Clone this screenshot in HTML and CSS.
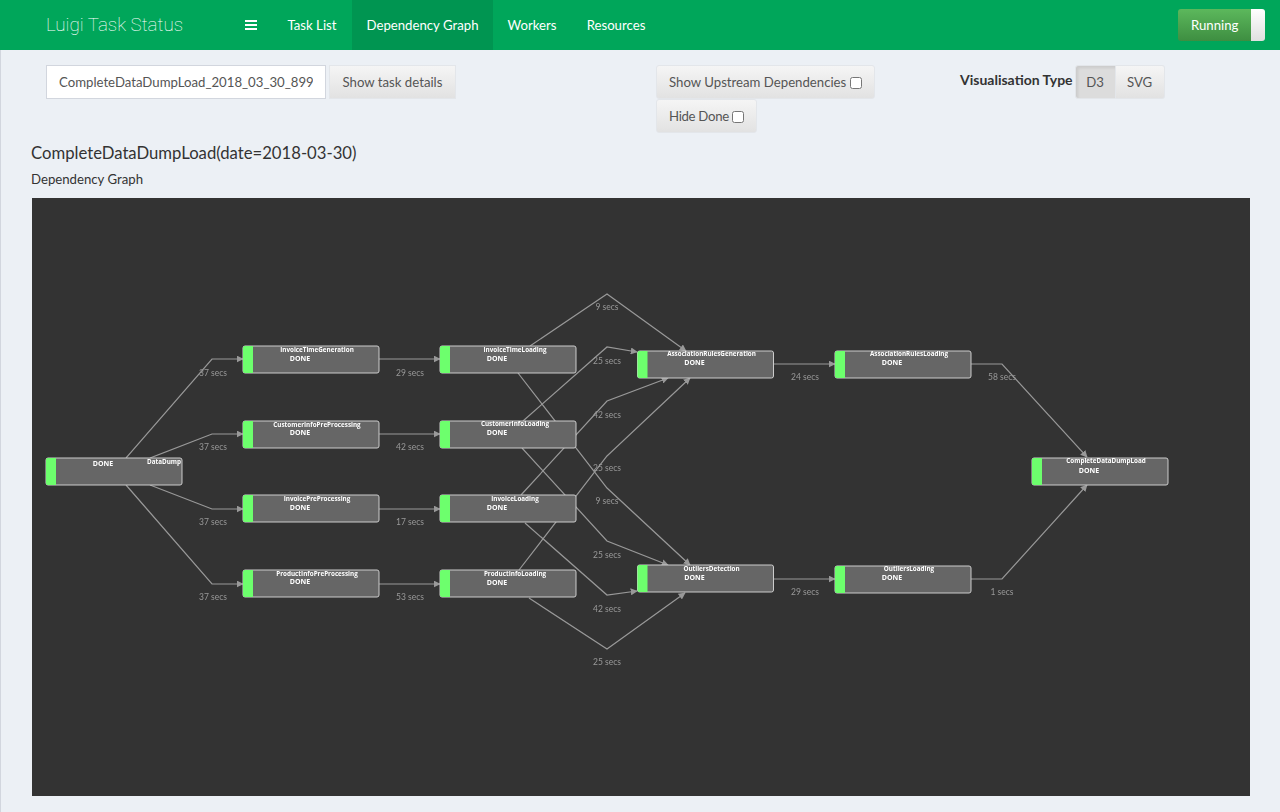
FILE: index.html
```html
<!DOCTYPE html>
<html lang="en">
<head>
<meta charset="UTF-8">
<title>Luigi Task Status</title>
<link rel="stylesheet" href="styles.css">
</head>
<body>
<header class="navbar">
    <a class="brand">Luigi Task Status</a>
    <nav class="nav-list">
        <a class="nav-item toggle-icon"><span class="bars"></span></a>
        <a class="nav-item">Task List</a>
        <a class="nav-item active">Dependency Graph</a>
        <a class="nav-item">Workers</a>
        <a class="nav-item">Resources</a>
    </nav>
    <div class="run-switch"><span class="run-label">Running</span><span class="run-handle"></span></div>
</header>

<main class="content">
    <div class="toolbar">
        <div class="search-group">
            <input class="task-input" type="text" value="CompleteDataDumpLoad_2018_03_30_8993f1a2b7">
            <button class="btn">Show task details</button>
        </div>
        <div class="option-group">
            <label class="btn">Show Upstream Dependencies <input type="checkbox"></label>
            <label class="btn btn-tight">Hide Done <input type="checkbox"></label>
        </div>
        <div class="vis-group">
            <span class="vis-label">Visualisation Type</span>
            <div class="btn-pair">
                <button class="btn pressed">D3</button>
                <button class="btn">SVG</button>
            </div>
        </div>
    </div>

    <h3 class="task-title">CompleteDataDumpLoad(date=2018-03-30)</h3>
    <p class="graph-caption">Dependency Graph</p>

    <div class="graph-panel">
        <!-- viewBox starts at the panel corner so the numbers below are page coordinates -->
        <svg class="graph" viewBox="32 198 1218 598" width="1218" height="598">
            <defs>
                <marker id="arrow" viewBox="0 0 10 10" refX="9" refY="5" markerWidth="7" markerHeight="7" markerUnits="userSpaceOnUse" orient="auto">
                    <path d="M0 0L10 5L0 10z" fill="#999"/>
                </marker>
            </defs>

            <g class="edges">
                <polyline points="126,458 212,359 243,359"/>
                <polyline points="150,458 212,434 243,434"/>
                <polyline points="150,485 212,509 243,509"/>
                <polyline points="126,485 212,584 243,584"/>
                <polyline points="379,359 440,359"/>
                <polyline points="379,434 440,434"/>
                <polyline points="379,509 440,509"/>
                <polyline points="379,584 440,584"/>
                <polyline points="530,346 607,294 686,351"/>
                <polyline points="523,421 607,347 637,352"/>
                <polyline points="521,495 607,401 668,378"/>
                <polyline points="519,570 607,456 690,378"/>
                <polyline points="518,373 607,488 690,565"/>
                <polyline points="522,448 607,541 668,565"/>
                <polyline points="525,523 607,595 637,591"/>
                <polyline points="529,598 607,649 685,593"/>
                <polyline points="774,364 835,364"/>
                <polyline points="774,579 835,579"/>
                <polyline points="971,364 1002,364 1087,457"/>
                <polyline points="971,579 1002,579 1087,485"/>
            </g>

            <g class="edge-labels">
                <text x="213" y="376">37 secs</text>
                <text x="213" y="450">37 secs</text>
                <text x="213" y="525">37 secs</text>
                <text x="213" y="600">37 secs</text>
                <text x="410" y="376">29 secs</text>
                <text x="410" y="450">42 secs</text>
                <text x="410" y="525">17 secs</text>
                <text x="410" y="600">53 secs</text>
                <text x="607" y="310">9 secs</text>
                <text x="607" y="364">25 secs</text>
                <text x="607" y="418">42 secs</text>
                <text x="607" y="471">25 secs</text>
                <text x="607" y="504">9 secs</text>
                <text x="607" y="558">25 secs</text>
                <text x="607" y="612">42 secs</text>
                <text x="607" y="665">25 secs</text>
                <text x="805" y="380">24 secs</text>
                <text x="805" y="595">29 secs</text>
                <text x="1002" y="380">58 secs</text>
                <text x="1002" y="595">1 secs</text>
            </g>

            <g class="node" transform="translate(46 458)">
                <rect class="node-box" width="136" height="27" rx="2"/>
                <path class="node-state" d="M0 2a2 2 0 0 1 2-2h8v27H2a2 2 0 0 1-2-2z"/>
                <text class="node-name" x="118" y="5.5">DataDump</text>
                <text class="node-status" x="57" y="8">DONE</text>
            </g>
            <g class="node" transform="translate(243 346)">
                <rect class="node-box" width="136" height="27" rx="2"/>
                <path class="node-state" d="M0 2a2 2 0 0 1 2-2h8v27H2a2 2 0 0 1-2-2z"/>
                <text class="node-name" x="74" y="5.5">InvoiceTimeGeneration</text>
                <text class="node-status" x="57" y="15">DONE</text>
            </g>
            <g class="node" transform="translate(243 421)">
                <rect class="node-box" width="136" height="27" rx="2"/>
                <path class="node-state" d="M0 2a2 2 0 0 1 2-2h8v27H2a2 2 0 0 1-2-2z"/>
                <text class="node-name" x="74" y="5.5">CustomerInfoPreProcessing</text>
                <text class="node-status" x="57" y="14">DONE</text>
            </g>
            <g class="node" transform="translate(243 495)">
                <rect class="node-box" width="136" height="27" rx="2"/>
                <path class="node-state" d="M0 2a2 2 0 0 1 2-2h8v27H2a2 2 0 0 1-2-2z"/>
                <text class="node-name" x="74" y="6">InvoicePreProcessing</text>
                <text class="node-status" x="57" y="15">DONE</text>
            </g>
            <g class="node" transform="translate(243 570)">
                <rect class="node-box" width="136" height="27" rx="2"/>
                <path class="node-state" d="M0 2a2 2 0 0 1 2-2h8v27H2a2 2 0 0 1-2-2z"/>
                <text class="node-name" x="74" y="6">ProductInfoPreProcessing</text>
                <text class="node-status" x="57" y="14">DONE</text>
            </g>
            <g class="node" transform="translate(440 346)">
                <rect class="node-box" width="136" height="27" rx="2"/>
                <path class="node-state" d="M0 2a2 2 0 0 1 2-2h8v27H2a2 2 0 0 1-2-2z"/>
                <text class="node-name" x="75" y="5.5">InvoiceTimeLoading</text>
                <text class="node-status" x="57" y="15">DONE</text>
            </g>
            <g class="node" transform="translate(440 421)">
                <rect class="node-box" width="136" height="27" rx="2"/>
                <path class="node-state" d="M0 2a2 2 0 0 1 2-2h8v27H2a2 2 0 0 1-2-2z"/>
                <text class="node-name" x="75" y="5">CustomerInfoLoading</text>
                <text class="node-status" x="57" y="14">DONE</text>
            </g>
            <g class="node" transform="translate(440 495)">
                <rect class="node-box" width="136" height="27" rx="2"/>
                <path class="node-state" d="M0 2a2 2 0 0 1 2-2h8v27H2a2 2 0 0 1-2-2z"/>
                <text class="node-name" x="75" y="6">InvoiceLoading</text>
                <text class="node-status" x="57" y="15">DONE</text>
            </g>
            <g class="node" transform="translate(440 570)">
                <rect class="node-box" width="136" height="27" rx="2"/>
                <path class="node-state" d="M0 2a2 2 0 0 1 2-2h8v27H2a2 2 0 0 1-2-2z"/>
                <text class="node-name" x="75" y="6">ProductInfoLoading</text>
                <text class="node-status" x="57" y="15">DONE</text>
            </g>
            <g class="node" transform="translate(637.5 351)">
                <rect class="node-box" width="136" height="27" rx="2"/>
                <path class="node-state" d="M0 2a2 2 0 0 1 2-2h8v27H2a2 2 0 0 1-2-2z"/>
                <text class="node-name" x="74" y="5">AssociationRulesGeneration</text>
                <text class="node-status" x="57" y="14">DONE</text>
            </g>
            <g class="node" transform="translate(637.5 565)">
                <rect class="node-box" width="136" height="27" rx="2"/>
                <path class="node-state" d="M0 2a2 2 0 0 1 2-2h8v27H2a2 2 0 0 1-2-2z"/>
                <text class="node-name" x="74" y="6">OutliersDetection</text>
                <text class="node-status" x="57" y="15">DONE</text>
            </g>
            <g class="node" transform="translate(835 351)">
                <rect class="node-box" width="136" height="27" rx="2"/>
                <path class="node-state" d="M0 2a2 2 0 0 1 2-2h8v27H2a2 2 0 0 1-2-2z"/>
                <text class="node-name" x="74" y="5">AssociationRulesLoading</text>
                <text class="node-status" x="57" y="14">DONE</text>
            </g>
            <g class="node" transform="translate(835 566)">
                <rect class="node-box" width="136" height="27" rx="2"/>
                <path class="node-state" d="M0 2a2 2 0 0 1 2-2h8v27H2a2 2 0 0 1-2-2z"/>
                <text class="node-name" x="74" y="5">OutliersLoading</text>
                <text class="node-status" x="57" y="14">DONE</text>
            </g>
            <g class="node" transform="translate(1032 458)">
                <rect class="node-box" width="136" height="27" rx="2"/>
                <path class="node-state" d="M0 2a2 2 0 0 1 2-2h8v27H2a2 2 0 0 1-2-2z"/>
                <text class="node-name" x="74" y="5">CompleteDataDumpLoad</text>
                <text class="node-status" x="57" y="15">DONE</text>
            </g>
        </svg>
    </div>
</main>
</body>
</html>
```

FILE: styles.css
```css
* {
    box-sizing: border-box;
}
body {
    margin: 0;
    background-color: #ecf0f5;
    color: #333;
    font-family: Lato, "Open Sans", sans-serif;
    font-size: 13.2px;
}

/* top bar */
.navbar {
    display: flex;
    align-items: stretch;
    height: 50px;
    padding: 0 15px 0 46px;
    background-color: #00a65a;
    color: #fff;
}
.brand {
    width: 184px;
    line-height: 50px;
    font-family: Roboto, sans-serif;
    font-size: 18.8px;
    font-weight: 100;
}
.nav-list {
    display: grid;
    grid-template-columns: 42px 80px 141px 78px 90px;
}
.nav-item {
    line-height: 50px;
    text-align: center;
}
.nav-item.active {
    background-color: #009551;
}
.toggle-icon {
    display: flex;
    align-items: center;
    justify-content: center;
}
.bars {
    width: 12px;
    height: 10px;
    border-top: 2px solid #fff;
    border-bottom: 2px solid #fff;
    background: linear-gradient(#fff, #fff) center / 100% 2px no-repeat;
}
.run-switch {
    display: flex;
    width: 87px;
    height: 32px;
    margin: 9px 0 0 auto;
    border-radius: 3px;
    overflow: hidden;
}
.run-label {
    flex: 1;
    padding-left: 13px;
    line-height: 32px;
    background: linear-gradient(#5cb85c, #3e8e41);
}
.run-handle {
    width: 14px;
    background: linear-gradient(#fff, #e0e0e0);
}

/* controls row */
.content {
    padding: 15px 30px 0 30px;
    border-left: 1px solid #d2d6de;
    min-height: 762px;
}
.toolbar {
    display: grid;
    grid-template-columns: 625px 304px auto;
    height: 78px;
}
.search-group {
    display: flex;
    gap: 3px;
    align-items: flex-start;
    padding-left: 15px;
}
.task-input {
    width: 280px;
    height: 34px;
    padding: 0 12px;
    border: 1px solid #d2d6de;
    background-color: #fff;
    color: #555;
    font: inherit;
}
.btn {
    display: inline-block;
    height: 34px;
    padding: 0 12px;
    border: 1px solid #e3e6ea;
    border-radius: 3px;
    background: linear-gradient(#f5f5f5, #e2e2e2);
    color: #555;
    font: inherit;
    line-height: 32px;
    white-space: nowrap;
}
.btn-tight {
    letter-spacing: -0.3px;
}
.search-group .btn {
    border-radius: 0;
    width: 127px;
}
.option-group {
    display: flex;
    flex-direction: column;
    align-items: flex-start;
}
.btn input {
    width: 12px;
    height: 12px;
    margin: 0;
    vertical-align: -2px;
}
.vis-group {
    display: flex;
    gap: 2px;
    align-items: flex-start;
}
.vis-label {
    padding-top: 6px;
    font-size: 14px;
    font-weight: 700;
    color: #333;
}
.btn-pair {
    display: grid;
    grid-template-columns: 41px 49px;
}
.btn-pair .btn {
    padding: 0;
}
.btn-pair .btn:first-child {
    border-radius: 3px 0 0 3px;
}
.btn-pair .btn:last-child {
    border-radius: 0 3px 3px 0;
    border-left: 0;
}
.btn.pressed {
    background: #dcdcdc;
    box-shadow: inset 2px 2px 3px rgba(0, 0, 0, 0.08);
}

/* heading */
.task-title {
    margin: 0;
    font-size: 16.7px;
    font-weight: 400;
    line-height: 20px;
}
.graph-caption {
    margin: 7px 0 10px;
    line-height: 18px;
}

/* graph */
.graph-panel {
    width: 1218px;
    height: 598px;
    margin-left: 1px;
    background-color: #333;
}
.graph {
    display: block;
    will-change: transform;
}
.edges polyline {
    fill: none;
    stroke: #999;
    stroke-width: 1.2;
    marker-end: url(#arrow);
}
.edge-labels text {
    fill: #999;
    font-size: 8.5px;
    text-anchor: middle;
}
.node-box {
    fill: #666;
    stroke: #ccc;
    stroke-width: 1;
}
.node-state {
    fill: #6dff6d;
}
.node-name {
    fill: #fff;
    font-family: "Open Sans", sans-serif;
    font-size: 6.3px;
    font-weight: 700;
    text-anchor: middle;
}
.node-status {
    fill: #fff;
    font-family: "Open Sans", sans-serif;
    font-size: 7px;
    font-weight: 700;
    text-anchor: middle;
}
```
